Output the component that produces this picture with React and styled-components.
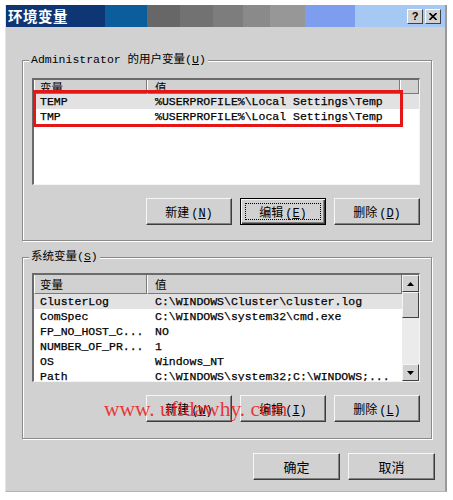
import React from "react";
import styled, { createGlobalStyle } from "styled-components";

const GlobalStyle = createGlobalStyle`
  body {
    margin: 0;
    background: #fff;
    font-family: "Liberation Mono", "Noto Sans CJK SC", monospace;
    font-size: 11.5px;
    color: #000;
  }
`;

const FACE = "#d1d1d1";

const Window = styled.div`
  position: relative;
  box-sizing: border-box;
  width: 442px;
  height: 487px;
  margin: 5px 0 0 5px;
  background: ${FACE};
  border-left: 1px solid #e4e4e4;
  border-right: 2px solid #9a9a9a;
  border-bottom: 1px solid #b4b4b4;
  display: flex;
  flex-direction: column;
`;

const TitleBar = styled.div`
  height: 22px;
  display: flex;
  align-items: center;
  justify-content: space-between;
  padding: 0 4px 0 2px;
  background: linear-gradient(
    to right,
    #0e3674 0 99px,
    #0b5d9b 99px 141px,
    #676767 141px 174px,
    #727272 174px 207px,
    #7d7d7d 207px 237px,
    #8a8a8a 237px 264px,
    #979797 264px 299px,
    #7d9def 299px 349px,
    #a6c9f3 349px 100%
  );
`;

const Title = styled.span`
  color: #fff;
  font-family: "Noto Sans CJK SC", sans-serif;
  font-weight: 700;
  font-size: 14.5px;
  letter-spacing: 0.5px;
  line-height: 22px;
`;

const CaptionButtons = styled.div`
  display: flex;
  gap: 2px;
`;

const CaptionButton = styled.div`
  box-sizing: border-box;
  width: 16px;
  height: 15px;
  display: flex;
  align-items: center;
  justify-content: center;
  background: ${FACE};
  border: 1px solid;
  border-color: #fff #404040 #404040 #fff;
  font-family: "Liberation Sans", sans-serif;
  font-weight: 700;
  font-size: 11px;
  color: #000;
`;

const Body = styled.div`
  flex: 1;
  display: flex;
  flex-direction: column;
  padding: 33px 10px 0 16px;
`;

const GroupBox = styled.div`
  position: relative;
  box-sizing: border-box;
  width: 410px;
  height: ${(p) => p.$height}px;
  margin-top: ${(p) => p.$gap}px;
  padding: ${(p) => p.$padTop}px 11px 0 9px;
  border: 1px solid #8a8a8a;
  box-shadow: inset 1px 1px 0 #fff, 1px 1px 0 #fff;
  display: flex;
  flex-direction: column;
`;

const GroupLabel = styled.span`
  position: absolute;
  top: -8px;
  left: 6px;
  padding: 0 2px;
  background: ${FACE};
  line-height: 14px;
  font-size: 11.5px;
  white-space: pre;
`;

const Accel = styled.span`
  text-decoration: underline;
`;

const Paren = styled.span`
  margin-left: 2px;
`;

const ListView = styled.div`
  position: relative;
  box-sizing: border-box;
  width: 388px;
  height: ${(p) => p.$height}px;
  background: #fff;
  border-top: 2px solid #6a6a6a;
  border-left: 2px solid #6a6a6a;
  border-right: 1px solid #f4f4f4;
  border-bottom: 1px solid #f4f4f4;
  display: flex;
`;

const Table = styled.div`
  flex: 1;
  display: flex;
  flex-direction: column;
  overflow: hidden;
`;

const Header = styled.div`
  display: flex;
  height: ${(p) => p.$height}px;
  flex: none;
  background: ${FACE};
`;

const HeadCell = styled.div`
  box-sizing: border-box;
  width: ${(p) => (p.$w ? `${p.$w}px` : "auto")};
  flex: ${(p) => (p.$w ? "none" : "1")};
  padding-left: ${(p) => p.$pad}px;
  border-left: 1px solid #fff;
  border-right: 1px solid #7a7a7a;
  border-bottom: 1px solid #7a7a7a;
  display: flex;
  align-items: center;
  font-family: "Noto Sans CJK SC", sans-serif;
  font-size: 11.5px;
  line-height: 12px;
`;

const Row = styled.div`
  display: flex;
  height: 15px;
  flex: none;
  background: ${(p) => (p.$selected ? "#e2e2e2" : "#fff")};
  line-height: 15px;
  white-space: pre;
  -webkit-text-stroke: 0.25px #000;
`;

const NameCell = styled.div`
  box-sizing: border-box;
  width: 113px;
  padding-left: 6px;
  overflow: hidden;
`;

const ValueCell = styled.div`
  flex: 1;
  padding-left: 8px;
  overflow: hidden;
`;

const RedMark = styled.div`
  position: absolute;
  left: -1px;
  top: 10px;
  width: 370px;
  height: 37px;
  box-sizing: border-box;
  border: 3px solid #e41616;
`;

const ScrollBar = styled.div`
  width: 17px;
  flex: none;
  display: flex;
  flex-direction: column;
  background: #ebebeb;
`;

const ScrollPart = styled.div`
  box-sizing: border-box;
  height: ${(p) => p.$h}px;
  flex: none;
  background: ${FACE};
  border: 1px solid;
  border-color: #f4f4f4 #404040 #404040 #f4f4f4;
  display: flex;
  align-items: center;
  justify-content: center;
`;

const Track = styled.div`
  flex: 1;
`;

const ButtonRow = styled.div`
  display: flex;
  justify-content: flex-end;
  gap: 8px;
  margin-top: 13px;
`;

const Button = styled.div`
  position: relative;
  box-sizing: border-box;
  width: ${(p) => p.$w || 86}px;
  height: 27px;
  display: flex;
  align-items: center;
  justify-content: center;
  background: ${FACE};
  border: 1px solid;
  border-color: ${(p) => (p.$default ? "#000" : "#f6f6f6 #3c3c3c #3c3c3c #f6f6f6")};
  box-shadow: ${(p) =>
    p.$default
      ? "inset 1px 1px 0 #f6f6f6, inset -1px -1px 0 #3c3c3c, inset -2px -2px 0 #808080"
      : "inset -1px -1px 0 #808080"};
  font-size: ${(p) => p.$fs || 12}px;
  white-space: pre;
`;

const FocusRing = styled.div`
  position: absolute;
  inset: 4px;
  border: 1px dotted #000;
`;

const DialogButtons = styled.div`
  display: flex;
  justify-content: flex-end;
  gap: 8px;
  margin-top: 14px;
`;

const Watermark = styled.div`
  position: absolute;
  left: 98px;
  top: 392px;
  font-family: "Liberation Serif", serif;
  font-size: 21.5px;
  color: rgba(238, 24, 24, 0.85);
  white-space: pre;
  pointer-events: none;
`;

const Arrow = ({ up }) => (
  <svg width="7" height="4" viewBox="0 0 7 4">
    <path d={up ? "M0 4 L3.5 0 L7 4 Z" : "M0 0 L3.5 4 L7 0 Z"} fill="#000" />
  </svg>
);

const userVars = [
  { name: "TEMP", value: "%USERPROFILE%\\Local Settings\\Temp", selected: true },
  { name: "TMP", value: "%USERPROFILE%\\Local Settings\\Temp" },
];

const systemVars = [
  { name: "ClusterLog", value: "C:\\WINDOWS\\Cluster\\cluster.log", selected: true },
  { name: "ComSpec", value: "C:\\WINDOWS\\system32\\cmd.exe" },
  { name: "FP_NO_HOST_C...", value: "NO" },
  { name: "NUMBER_OF_PR...", value: "1" },
  { name: "OS", value: "Windows_NT" },
  { name: "Path", value: "C:\\WINDOWS\\system32;C:\\WINDOWS;..." },
];

const VarRows = ({ items }) =>
  items.map((v) => (
    <Row key={v.name} $selected={v.selected}>
      <NameCell>{v.name}</NameCell>
      <ValueCell>{v.value}</ValueCell>
    </Row>
  ));

const Label = ({ text, accel }) => (
  <span>
    {text}
    <Paren>
      (<Accel>{accel}</Accel>)
    </Paren>
  </span>
);

export default function App() {
  return (
    <>
      <GlobalStyle />
      <Window>
        <TitleBar>
          <Title>环境变量</Title>
          <CaptionButtons>
            <CaptionButton>?</CaptionButton>
            <CaptionButton>
              <svg width="8" height="7" viewBox="0 0 8 7">
                <path d="M0.5 0 L7.5 7 M7.5 0 L0.5 7" stroke="#000" strokeWidth="1.6" />
              </svg>
            </CaptionButton>
          </CaptionButtons>
        </TitleBar>

        <Body>
          <GroupBox $height={181} $gap={0} $padTop={17}>
            <GroupLabel>
              Administrator 的用户变量(<Accel>U</Accel>)
            </GroupLabel>
            <ListView $height={107}>
              <Table>
                <Header $height={14}>
                  <HeadCell $w={113} $pad={5}>变量</HeadCell>
                  <HeadCell $w={253} $pad={7}>值</HeadCell>
                  <HeadCell $pad={0} />
                </Header>
                <VarRows items={userVars} />
              </Table>
              <RedMark />
            </ListView>
            <ButtonRow>
              <Button><Label text="新建" accel="N" /></Button>
              <Button $default>
                <FocusRing />
                <Label text="编辑" accel="E" />
              </Button>
              <Button><Label text="删除" accel="D" /></Button>
            </ButtonRow>
          </GroupBox>

          <GroupBox $height={182} $gap={16} $padTop={15}>
            <GroupLabel>
              系统变量(<Accel>S</Accel>)
            </GroupLabel>
            <ListView $height={109}>
              <Table>
                <Header $height={19}>
                  <HeadCell $w={113} $pad={5}>变量</HeadCell>
                  <HeadCell $pad={7}>值</HeadCell>
                </Header>
                <VarRows items={systemVars} />
              </Table>
              <ScrollBar>
                <ScrollPart $h={17}><Arrow up /></ScrollPart>
                <ScrollPart $h={26} />
                <Track />
                <ScrollPart $h={17}><Arrow /></ScrollPart>
              </ScrollBar>
            </ListView>
            <ButtonRow>
              <Button><Label text="新建" accel="W" /></Button>
              <Button><Label text="编辑" accel="I" /></Button>
              <Button><Label text="删除" accel="L" /></Button>
            </ButtonRow>
          </GroupBox>

          <DialogButtons>
            <Button $w={87} $fs={13}>确定</Button>
            <Button $w={87} $fs={13}>取消</Button>
          </DialogButtons>
        </Body>

        <Watermark>www. ufidawhy. com</Watermark>
      </Window>
    </>
  );
}
